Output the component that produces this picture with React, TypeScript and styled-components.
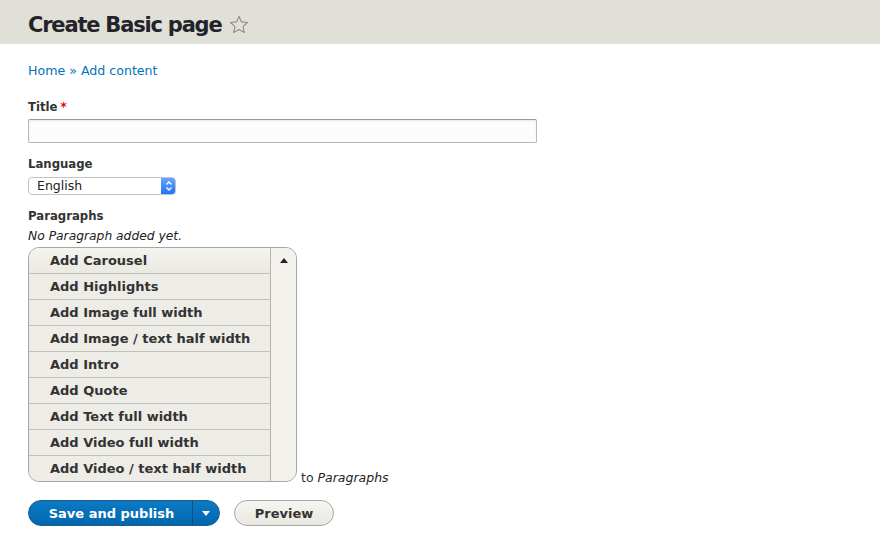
import React from "react";
import styled, { createGlobalStyle } from "styled-components";

const GlobalStyle = createGlobalStyle`
  body {
    margin: 0;
    background: #fff;
    font-family: "DejaVu Sans", "Liberation Sans", sans-serif;
    color: #222330;
  }
`;

const paragraphTypes = [
  "Add Carousel",
  "Add Highlights",
  "Add Image full width",
  "Add Image / text half width",
  "Add Intro",
  "Add Quote",
  "Add Text full width",
  "Add Video full width",
  "Add Video / text half width",
];

const Header = styled.header`
  height: 44px;
  background: #e0e0d8;
  display: flex;
  align-items: center;
  padding: 0 28px;
  gap: 7px;
`;

const PageTitle = styled.h1`
  margin: 0;
  font-size: 21px;
  font-weight: bold;
  letter-spacing: -1.2px;
  color: #232429;
  line-height: 30px;
  padding-top: 6px;
`;

const StarWrap = styled.span`
  display: flex;
  padding-top: 5px;
`;

const Content = styled.main`
  padding: 0 28px;
  display: flex;
  flex-direction: column;
  align-items: flex-start;
`;

const Breadcrumb = styled.nav`
  margin-top: 19px;
  font-size: 12.6px;
  line-height: 16px;
  color: #0074bd;
`;

const Label = styled.label<{ gap: number }>`
  margin-top: ${(p) => p.gap}px;
  font-size: 11.7px;
  font-weight: bold;
  line-height: 16px;
  color: #333;
`;

const Required = styled.span`
  color: #e00;
  margin-left: 3px;
`;

const TextInput = styled.div`
  margin-top: 4px;
  width: 509px;
  height: 24px;
  box-sizing: border-box;
  border: 1px solid #b8b8b8;
  border-top-color: #999;
  border-radius: 2px;
  background: #fcfcfa;
  box-shadow: inset 0 1px 2px rgba(0, 0, 0, 0.08);
`;

const Select = styled.div`
  margin-top: 5px;
  width: 148px;
  height: 18px;
  box-sizing: border-box;
  display: flex;
  border: 1px solid #c4c4c4;
  border-radius: 4px;
  background: #fff;
  overflow: hidden;
`;

const SelectValue = styled.span`
  flex: 1;
  padding-left: 8px;
  font-size: 12.5px;
  line-height: 16px;
  color: #222;
`;

const SelectButton = styled.span`
  width: 15px;
  margin: -1px -1px -1px 0;
  border-radius: 0 4px 4px 0;
  background: linear-gradient(#6aa9ff, #1f6ff2);
  display: flex;
  align-items: center;
  justify-content: center;
`;

const Hint = styled.div`
  margin-top: 4px;
  font-size: 12.3px;
  font-style: italic;
  line-height: 16px;
  color: #222;
`;

const ListRow = styled.div`
  margin-top: 3px;
  display: flex;
  align-items: flex-end;
  gap: 4px;
`;

const DropList = styled.div`
  width: 269px;
  box-sizing: border-box;
  display: flex;
  border: 1px solid #a6a6a6;
  border-radius: 11px;
  overflow: hidden;
  background: #f2f1ec;
`;

const Items = styled.div`
  flex: 1;
  display: flex;
  flex-direction: column;
`;

const Item = styled.div<{ first?: boolean }>`
  height: 25px;
  padding-left: 21px;
  display: flex;
  align-items: center;
  font-size: 13px;
  font-weight: bold;
  color: #333;
  background: ${(p) =>
    p.first ? "linear-gradient(#f5f4f0, #e9e8e1)" : "#edece6"};
  & + & {
    border-top: 1px solid #c2c1bb;
  }
`;

const Toggle = styled.div`
  width: 25px;
  border-left: 1px solid #b5b4ae;
  background: #f2f1ec;
  display: flex;
  justify-content: center;
  padding-top: 10px;
`;

const ToText = styled.span`
  font-size: 12.5px;
  line-height: 16px;
  margin-bottom: -4px;
  color: #333;
  & em {
    color: #222;
  }
`;

const Actions = styled.div`
  margin-top: 18px;
  display: flex;
  gap: 14px;
`;

const SplitButton = styled.div`
  display: flex;
  height: 26px;
  border-radius: 13px;
  overflow: hidden;
  background: linear-gradient(#0c7ac5, #0067ad);
  border: 1px solid #1e5c90;
  box-sizing: border-box;
`;

const PrimaryPart = styled.span`
  width: 164px;
  display: flex;
  align-items: center;
  justify-content: center;
  padding-left: 2px;
  box-sizing: border-box;
  color: #fff;
  font-size: 13px;
  font-weight: bold;
  border-right: 1px solid #0c4f80;
`;

const ArrowPart = styled.span`
  width: 26px;
  display: flex;
  align-items: center;
  justify-content: center;
`;

const Button = styled.span`
  width: 100px;
  height: 26px;
  box-sizing: border-box;
  display: flex;
  align-items: center;
  justify-content: center;
  border: 1px solid #a6a6a6;
  border-radius: 13px;
  background: linear-gradient(#f6f5f1, #e8e7e0);
  color: #333;
  font-size: 13px;
  font-weight: bold;
`;

const Star = () => (
  <svg width="20" height="20" viewBox="0 0 20 20">
    <path
      d="M10 1.4l2.5 5.5 6 .6-4.5 4.1 1.3 5.9L10 14.5l-5.3 3L6 11.6 1.5 7.5l6-.6z"
      fill="none"
      stroke="#8e8e86"
      strokeWidth="1.1"
      strokeLinejoin="round"
    />
  </svg>
);

const App: React.FC = () => {
  return (
    <>
      <GlobalStyle />
      <Header>
        <PageTitle>Create Basic page</PageTitle>
        <StarWrap>
          <Star />
        </StarWrap>
      </Header>
      <Content>
        <Breadcrumb>Home » Add content</Breadcrumb>

        <Label gap={20}>
          Title<Required>*</Required>
        </Label>
        <TextInput />

        <Label gap={13}>Language</Label>
        <Select>
          <SelectValue>English</SelectValue>
          <SelectButton>
            <svg width="8" height="12" viewBox="0 0 8 12">
              <path
                d="M1.5 4.5L4 2l2.5 2.5M1.5 7.5L4 10l2.5-2.5"
                fill="none"
                stroke="#fff"
                strokeWidth="1.3"
              />
            </svg>
          </SelectButton>
        </Select>

        <Label gap={13}>Paragraphs</Label>
        <Hint>No Paragraph added yet.</Hint>
        <ListRow>
          <DropList>
            <Items>
              {paragraphTypes.map((name, i) => (
                <Item key={name} first={i === 0}>
                  {name}
                </Item>
              ))}
            </Items>
            <Toggle>
              <svg width="8" height="5" viewBox="0 0 8 5">
                <path d="M0 5L4 0l4 5z" fill="#222" />
              </svg>
            </Toggle>
          </DropList>
          <ToText>
            to <em>Paragraphs</em>
          </ToText>
        </ListRow>

        <Actions>
          <SplitButton>
            <PrimaryPart>Save and publish</PrimaryPart>
            <ArrowPart>
              <svg width="8" height="5" viewBox="0 0 8 5">
                <path d="M0 0h8L4 5z" fill="#fff" />
              </svg>
            </ArrowPart>
          </SplitButton>
          <Button>Preview</Button>
        </Actions>
      </Content>
    </>
  );
};

export default App;
